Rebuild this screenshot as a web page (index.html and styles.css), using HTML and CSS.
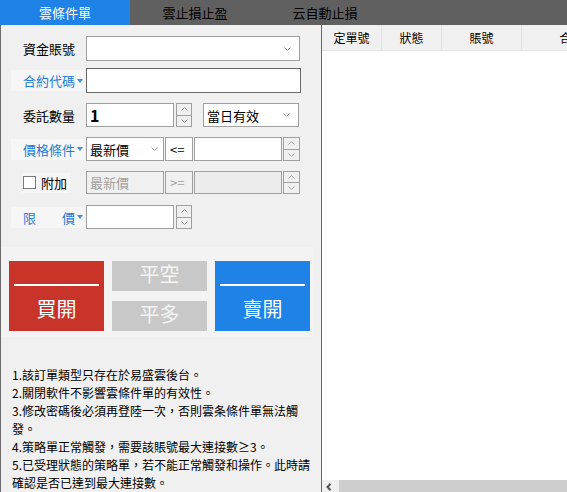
FILE: index.html
```html
<!DOCTYPE html>
<html>
<head>
<meta charset="utf-8">
<link rel="stylesheet" href="styles.css">
</head>
<body>
<div class="app">
  <div class="tabs">
    <div class="tab active">雲條件單</div>
    <div class="tab">雲止損止盈</div>
    <div class="tab">云自動止損</div>
  </div>
  <div class="main">
    <div class="left">
      <div class="form">
        <div class="row h25">
          <div class="label">資金賬號</div>
          <div class="box w-acct"><svg class="chev" width="7" height="4" viewBox="0 0 7 4"><polyline points="0.5,0.5 3.5,3.5 6.5,0.5" fill="none" stroke="#9a9a9a" stroke-width="1"/></svg></div>
        </div>
        <div class="row h25 r2">
          <div class="label drop"><span>合約代碼</span><i class="tri"></i></div>
          <div class="box w-contract focus"></div>
        </div>
        <div class="row h24 r3">
          <div class="label">委託數量</div>
          <div class="box w-num qty">1</div>
          <div class="spin s16"><div class="sp"><svg width="7" height="4" viewBox="0 0 7 4"><polyline points="0.5,3.5 3.5,0.5 6.5,3.5" fill="none" stroke="#9a9a9a" stroke-width="1"/></svg></div><div class="sp"><svg width="7" height="4" viewBox="0 0 7 4"><polyline points="0.5,0.5 3.5,3.5 6.5,0.5" fill="none" stroke="#9a9a9a" stroke-width="1"/></svg></div></div>
          <div class="box w-tif">當日有效<svg class="chev" width="7" height="4" viewBox="0 0 7 4"><polyline points="0.5,0.5 3.5,3.5 6.5,0.5" fill="none" stroke="#9a9a9a" stroke-width="1"/></svg></div>
        </div>
        <div class="row h24 r3">
          <div class="label drop"><span>價格條件</span><i class="tri"></i></div>
          <div class="box w-price">最新價<svg class="chev near" width="7" height="4" viewBox="0 0 7 4"><polyline points="0.5,0.5 3.5,3.5 6.5,0.5" fill="none" stroke="#9a9a9a" stroke-width="1"/></svg></div>
          <div class="box w-op">&lt;=</div>
          <div class="box w-val"></div>
          <div class="spin s17"><div class="sp"><svg width="7" height="4" viewBox="0 0 7 4"><polyline points="0.5,3.5 3.5,0.5 6.5,3.5" fill="none" stroke="#9a9a9a" stroke-width="1"/></svg></div><div class="sp"><svg width="7" height="4" viewBox="0 0 7 4"><polyline points="0.5,0.5 3.5,3.5 6.5,0.5" fill="none" stroke="#9a9a9a" stroke-width="1"/></svg></div></div>
        </div>
        <div class="row h23 r3">
          <div class="label">
            <div class="chk"><span class="cb"></span><span class="cbt">附加</span></div>
          </div>
          <div class="box w-price dis">最新價</div>
          <div class="box w-op dis">&gt;=</div>
          <div class="box w-val dis dis-in"></div>
          <div class="spin s17 dis"><div class="sp"><svg width="7" height="4" viewBox="0 0 7 4"><polyline points="0.5,3.5 3.5,0.5 6.5,3.5" fill="none" stroke="#a8a8a8" stroke-width="1"/></svg></div><div class="sp"><svg width="7" height="4" viewBox="0 0 7 4"><polyline points="0.5,0.5 3.5,3.5 6.5,0.5" fill="none" stroke="#a8a8a8" stroke-width="1"/></svg></div></div>
        </div>
        <div class="row h24 r6">
          <div class="label drop"><span>限　　價</span><i class="tri"></i></div>
          <div class="box w-num"></div>
          <div class="spin s16"><div class="sp"><svg width="7" height="4" viewBox="0 0 7 4"><polyline points="0.5,3.5 3.5,0.5 6.5,3.5" fill="none" stroke="#9a9a9a" stroke-width="1"/></svg></div><div class="sp"><svg width="7" height="4" viewBox="0 0 7 4"><polyline points="0.5,0.5 3.5,3.5 6.5,0.5" fill="none" stroke="#9a9a9a" stroke-width="1"/></svg></div></div>
        </div>
      </div>
      <div class="actions">
        <div class="bigbtn buy"><div class="rule"></div><div class="btxt">買開</div></div>
        <div class="mid">
          <div class="graybtn">平空</div>
          <div class="graybtn">平多</div>
        </div>
        <div class="bigbtn sell"><div class="rule"></div><div class="btxt">賣開</div></div>
      </div>
      <div class="notes">
        <p>1.該訂單類型只存在於易盛雲後台。</p>
        <p>2.關閉軟件不影響雲條件單的有效性。</p>
        <p>3.修改密碼後必須再登陸一次，否則雲条條件單無法觸發。</p>
        <p>4.策略單正常觸發，需要該賬號最大連接數≥3。</p>
        <p>5.已受理狀態的策略單，若不能正常觸發和操作。此時請確認是否已達到最大連接數。</p>
      </div>
    </div>
    <div class="right">
      <div class="thead">
        <div class="th c1">定單號</div>
        <div class="th c2">狀態</div>
        <div class="th c3">賬號</div>
        <div class="th c4">合約</div>
      </div>
      <div class="tbody"></div>
      <div class="hscroll">
        <div class="arrow"><svg width="6" height="8" viewBox="0 0 6 8"><polyline points="4.5,0.8 1.5,4 4.5,7.2" fill="none" stroke="#555" stroke-width="2"/></svg></div>
        <div class="track"></div>
      </div>
    </div>
  </div>
</div>
</body>
</html>
```

FILE: styles.css
```css
html, body {
  margin: 0;
  padding: 0;
}
body {
  width: 567px;
  height: 492px;
  overflow: hidden;
  background: #fff;
  font-family: "Noto Sans CJK TC", "Noto Sans CJK SC", sans-serif;
  color: #000;
}
.app {
  display: flex;
  flex-direction: column;
  height: 492px;
}
.tabs {
  display: flex;
  height: 25px;
  flex: none;
  background: #606060;
}
.tab {
  width: 130px;
  display: flex;
  align-items: center;
  justify-content: center;
  font-size: 13px;
  line-height: 1;
  color: #000;
}
.tab.active {
  background: #1e82e6;
  color: #fff;
}
.main {
  flex: 1;
  display: flex;
  min-height: 0;
}
.left {
  width: 320px;
  flex: none;
  background: #f0f0f0;
  border-left: 1px solid #6a6a6a;
  border-right: 1px solid #6a6a6a;
  display: flex;
  flex-direction: column;
}
.form {
  padding: 11px 0 0 10px;
}
.row {
  display: flex;
  align-items: center;
}
.h25 { height: 25px; }
.h24 { height: 24px; }
.h23 { height: 23px; }
.r2 { margin-top: 7px; }
.r3 { margin-top: 10px; }
.r6 { margin-top: 11px; }
.label {
  width: 75px;
  height: 21px;
  flex: none;
  box-sizing: border-box;
  padding-left: 12px;
  display: flex;
  align-items: center;
  font-size: 13px;
  line-height: 21px;
  white-space: nowrap;
}
.label.drop {
  width: 74px;
  margin-right: 1px;
  background: #f6f6f6;
  color: #1e7bd4;
}
.tri {
  display: block;
  width: 0;
  height: 0;
  margin-left: 2px;
  border-left: 3px solid transparent;
  border-right: 3px solid transparent;
  border-top: 4px solid #3d92e0;
}
.box {
  box-sizing: border-box;
  height: 100%;
  flex: none;
  border: 1px solid #a0a0a0;
  background: #fff;
  display: flex;
  align-items: center;
  padding-left: 3px;
  font-size: 13px;
  line-height: 1;
  white-space: nowrap;
}
.box.focus { border-color: #6a6a6a; }
.chev { margin-left: auto; margin-right: 8px; }
.chev.near { margin-right: 5px; }
.w-acct { width: 214px; }
.w-contract { width: 215px; }
.w-num { width: 88px; margin-right: 2px; }
.w-tif { width: 96px; margin-left: 11px; }
.w-price { width: 78px; }
.w-op { width: 28px; margin-left: 1px; padding-left: 4px; }
.w-val { width: 88px; margin-left: 1px; }
.qty {
  font-size: 16px;
  font-weight: bold;
}
.spin {
  box-sizing: border-box;
  height: 100%;
  flex: none;
  border: 1px solid #a0a0a0;
  background: #f0f0f0;
  display: flex;
  flex-direction: column;
}
.s16 { width: 16px; }
.s17 { width: 17px; margin-left: 1px; }
.sp {
  flex: 1;
  display: flex;
  align-items: center;
  justify-content: center;
}
.sp + .sp { border-top: 1px solid #a0a0a0; }
.box.dis {
  background: #f0f0f0;
  color: #a0a0a0;
}
.box.dis-in { background: #ececec; }
.chk {
  margin-left: -1px;
  width: 48px;
  height: 20px;
  background: #f6f6f6;
  display: flex;
  align-items: center;
}
.cb {
  width: 11px;
  height: 11px;
  margin-left: 1px;
  border: 1px solid #7a7a7a;
  background: #fff;
  flex: none;
}
.cbt {
  margin-left: 5px;
  font-size: 13px;
  color: #000;
}
.actions {
  margin-top: 18px;
  width: 312px;
  height: 90px;
  box-sizing: border-box;
  padding: 14px 0 0 8px;
  background: #f3f3f3;
  display: flex;
  align-items: flex-start;
  gap: 8px;
  flex: none;
}
.bigbtn {
  width: 95px;
  height: 70px;
  display: flex;
  flex-direction: column;
  align-items: center;
  flex: none;
}
.buy { background: #c9342a; }
.sell { background: #1e82e6; }
.rule {
  width: 85px;
  height: 2px;
  margin-top: 23px;
  background: #fff;
  flex: none;
}
.btxt {
  flex: 1;
  display: flex;
  align-items: center;
  color: #fff;
  font-size: 20px;
  line-height: 1;
}
.mid {
  width: 95px;
  display: flex;
  flex-direction: column;
  gap: 10px;
  flex: none;
}
.graybtn {
  height: 30px;
  box-sizing: border-box;
  padding-bottom: 4px;
  background: #c8c8c8;
  color: #f4f4f4;
  font-size: 20px;
  line-height: 1;
  display: flex;
  align-items: center;
  justify-content: center;
}
.notes {
  margin-top: 29px;
  padding-left: 11px;
  width: 300px;
  font-size: 12px;
  line-height: 18px;
}
.notes p {
  margin: 0;
}
.right {
  flex: 1;
  min-width: 0;
  display: flex;
  flex-direction: column;
  background: #fff;
}
.thead {
  height: 26px;
  box-sizing: border-box;
  background: #f0f0f0;
  border-bottom: 1px solid #e4e4e4;
  display: flex;
  flex: none;
}
.th {
  flex: none;
  box-sizing: border-box;
  border-right: 1px solid #e2e2e2;
  display: flex;
  align-items: center;
  justify-content: center;
  font-size: 12px;
  line-height: 1;
  white-space: nowrap;
}
.c1 { width: 60px; }
.c2 { width: 60px; }
.c3 { width: 80px; }
.c4 { width: 100px; }
.tbody { flex: 1; }
.hscroll {
  height: 12px;
  flex: none;
  display: flex;
  background: #cdcdcd;
}
.arrow {
  width: 17px;
  box-sizing: border-box;
  padding: 3px 0 0 4px;
  background: #f0f0f0;
  flex: none;
}
.arrow svg { display: block; }
.track { flex: 1; }
```
